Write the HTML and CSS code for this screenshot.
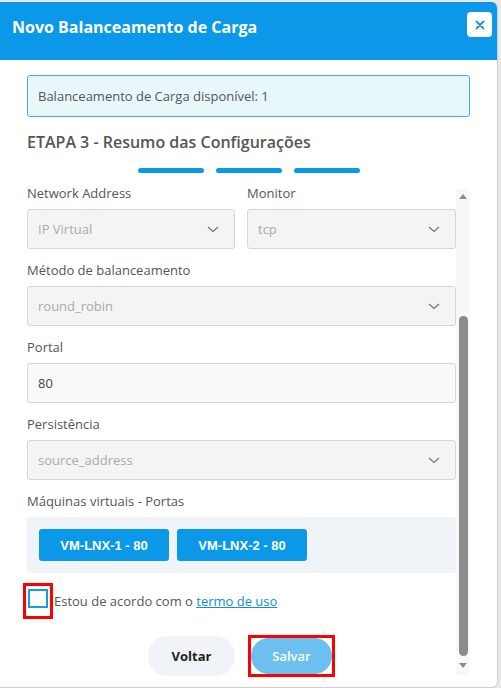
FILE: index.html
```html
<!DOCTYPE html>
<html lang="pt-BR">
<head>
<meta charset="utf-8">
<title>Novo Balanceamento de Carga</title>
<link rel="stylesheet" href="styles.css">
</head>
<body>
<div class="modal">
  <header class="modal-head">
    <h1 class="modal-title">Novo Balanceamento de Carga</h1>
    <button class="close" type="button" aria-label="Fechar">
      <svg width="10" height="10" viewBox="0 0 10 10"><path d="M1.5 1.5 L8.5 8.5 M8.5 1.5 L1.5 8.5" stroke="#1a8fe0" stroke-width="1.8" stroke-linecap="round"/></svg>
    </button>
  </header>

  <div class="modal-body">
    <div class="info">Balanceamento de Carga disponível: 1</div>
    <h2 class="step-title">ETAPA 3 - Resumo das Configurações</h2>
    <div class="steps"><span></span><span></span><span></span></div>

    <div class="scroller">
      <div class="form">
        <div class="row-2">
          <div class="field">
            <label class="label">Network Address</label>
            <div class="select"><span>IP Virtual</span><svg class="chev" width="12" height="7" viewBox="0 0 12 7"><path d="M1 1 L6 5.5 L11 1" fill="none" stroke="#777" stroke-width="1.3"/></svg></div>
          </div>
          <div class="field">
            <label class="label">Monitor</label>
            <div class="select"><span>tcp</span><svg class="chev" width="12" height="7" viewBox="0 0 12 7"><path d="M1 1 L6 5.5 L11 1" fill="none" stroke="#777" stroke-width="1.3"/></svg></div>
          </div>
        </div>

        <div class="field">
          <label class="label">Método de balanceamento</label>
          <div class="select"><span>round_robin</span><svg class="chev" width="12" height="7" viewBox="0 0 12 7"><path d="M1 1 L6 5.5 L11 1" fill="none" stroke="#777" stroke-width="1.3"/></svg></div>
        </div>

        <div class="field">
          <label class="label">Portal</label>
          <div class="input">80</div>
        </div>

        <div class="field">
          <label class="label">Persistência</label>
          <div class="select"><span>source_address</span><svg class="chev" width="12" height="7" viewBox="0 0 12 7"><path d="M1 1 L6 5.5 L11 1" fill="none" stroke="#777" stroke-width="1.3"/></svg></div>
        </div>

        <div class="field">
          <label class="label">Máquinas virtuais - Portas</label>
          <div class="vm-box">
            <button class="vm" type="button">VM-LNX-1 - 80</button>
            <button class="vm" type="button">VM-LNX-2 - 80</button>
          </div>
        </div>

        <div class="agree">
          <span class="mark mark-check"><span class="checkbox"></span></span>
          <span class="agree-text">Estou de acordo com o <a href="#" class="link">termo de uso</a></span>
        </div>

        <div class="actions">
          <button class="btn btn-back" type="button">Voltar</button>
          <span class="mark mark-save"><button class="btn btn-save" type="button">Salvar</button></span>
        </div>
      </div>

      <div class="scrollbar">
        <span class="arrow arrow-up"></span>
        <span class="thumb"></span>
        <span class="arrow arrow-down"></span>
      </div>
    </div>
  </div>
</div>
</body>
</html>
```

FILE: styles.css
```css
* { box-sizing: border-box; }

html, body {
  margin: 0;
  padding: 0;
}

body {
  background: #e9e9e9;
  font-family: "Open Sans", "Noto Sans", sans-serif;
  color: #555;
  font-size: 13px;
  line-height: 18px;
}

.modal {
  margin-top: 2px;
  width: 498px;
  height: 686px;
  background: #fff;
  border-radius: 0 6px 6px 0;
  border-right: 1px solid #cfcfcf;
  border-bottom: 1px solid #cfcfcf;
  overflow: hidden;
  display: flex;
  flex-direction: column;
}

/* header */
.modal-head {
  height: 58px;
  flex: none;
  background: #0b98e8;
  display: flex;
  justify-content: space-between;
  align-items: flex-start;
  padding: 0 5px 0 12px;
}

.modal-title {
  margin: 14px 0 0;
  font-size: 16px;
  line-height: 22px;
  font-weight: 700;
  color: #fff;
}

.close {
  margin-top: 10px;
  width: 25px;
  height: 25px;
  border: 0;
  border-radius: 4px;
  background: #fff;
  padding: 0;
  display: flex;
  align-items: center;
  justify-content: center;
}

/* body */
.modal-body {
  flex: 1;
  padding: 15px 27px 0 27px;
  display: flex;
  flex-direction: column;
}

.info {
  height: 42px;
  border: 1px solid #3aaee6;
  border-radius: 3px;
  background: #e8f7f9;
  padding: 11px 10px 0;
  color: #555;
}

.step-title {
  margin: 14px 0 0;
  font-size: 16px;
  line-height: 22px;
  font-weight: 600;
  color: #555;
}

.steps {
  margin-top: 15px;
  display: flex;
  justify-content: center;
  gap: 12px;
}
.steps span {
  width: 66px;
  height: 5px;
  border-radius: 3px;
  background: #0b98e8;
}

/* scrolling form area */
.scroller {
  margin-top: 11px;
  display: flex;
  height: 492px;
}

.form {
  width: 429px;
  display: flex;
  flex-direction: column;
  gap: 12px;
}

.row-2 {
  display: grid;
  grid-template-columns: 208px 209px;
  column-gap: 12px;
}

.field {
  display: flex;
  flex-direction: column;
}

.label {
  display: block;
  margin-bottom: 7px;
  color: #555;
}

.select,
.input {
  height: 40px;
  border: 1px solid #d6d6d6;
  border-radius: 3px;
  padding: 0 15px 0 10px;
  display: flex;
  align-items: center;
  justify-content: space-between;
}
.select {
  background: #f4f4f4;
  color: #aaa;
}
.input {
  background: #f9f9f9;
  color: #444;
}
.chev { flex: none; }

.vm-box {
  height: 56px;
  background: #f0f4f8;
  border-radius: 3px;
  padding: 12px;
  display: flex;
  gap: 8px;
}

.vm {
  height: 32px;
  width: 130px;
  border: 0;
  border-radius: 3px;
  background: #0b98e8;
  color: #fff;
  font-family: "Liberation Sans", Arial, sans-serif;
  font-weight: 700;
  font-size: 13px;
}

/* annotation frames */
.mark {
  border: 3px solid #f00;
  display: inline-flex;
}

.agree {
  margin-top: -2px;
  display: flex;
  align-items: center;
  color: #555;
}
.mark-check {
  margin-left: -4px;
  padding: 3px 2px 8px;
}
.checkbox {
  width: 20px;
  height: 19px;
  border: 2px solid #1a9be6;
  background: #fff;
}
.agree-text { margin-left: 1px; }
.link {
  color: #0b8fe0;
  text-decoration: underline;
}

.actions {
  margin-top: 4px;
  display: flex;
  justify-content: center;
  align-items: center;
  gap: 13px;
}

.btn {
  border: 0;
  font-family: "Open Sans", sans-serif;
  font-size: 13px;
  font-weight: 700;
}
.btn-back {
  width: 87px;
  height: 40px;
  border-radius: 20px;
  background: #f0f4f8;
  color: #222;
}
.mark-save { padding: 0; }
.btn-save {
  width: 81px;
  height: 36px;
  border-radius: 18px;
  background: #6cc0f0;
  color: #fff;
  font-weight: 600;
}

/* scrollbar */
.scrollbar {
  width: 15px;
  margin-top: 5px;
  height: 486px;
  background: #f8f8f8;
  display: flex;
  flex-direction: column;
  align-items: center;
}
.arrow {
  width: 0;
  height: 0;
  border-left: 4px solid transparent;
  border-right: 4px solid transparent;
}
.arrow-up {
  margin-top: 5px;
  border-bottom: 5px solid #8a8a8a;
}
.thumb {
  margin-top: 117px;
  width: 9px;
  height: 340px;
  border-radius: 5px;
  background: #8c8c8c;
}
.arrow-down {
  margin-top: 7px;
  border-top: 5px solid #8a8a8a;
}
```
